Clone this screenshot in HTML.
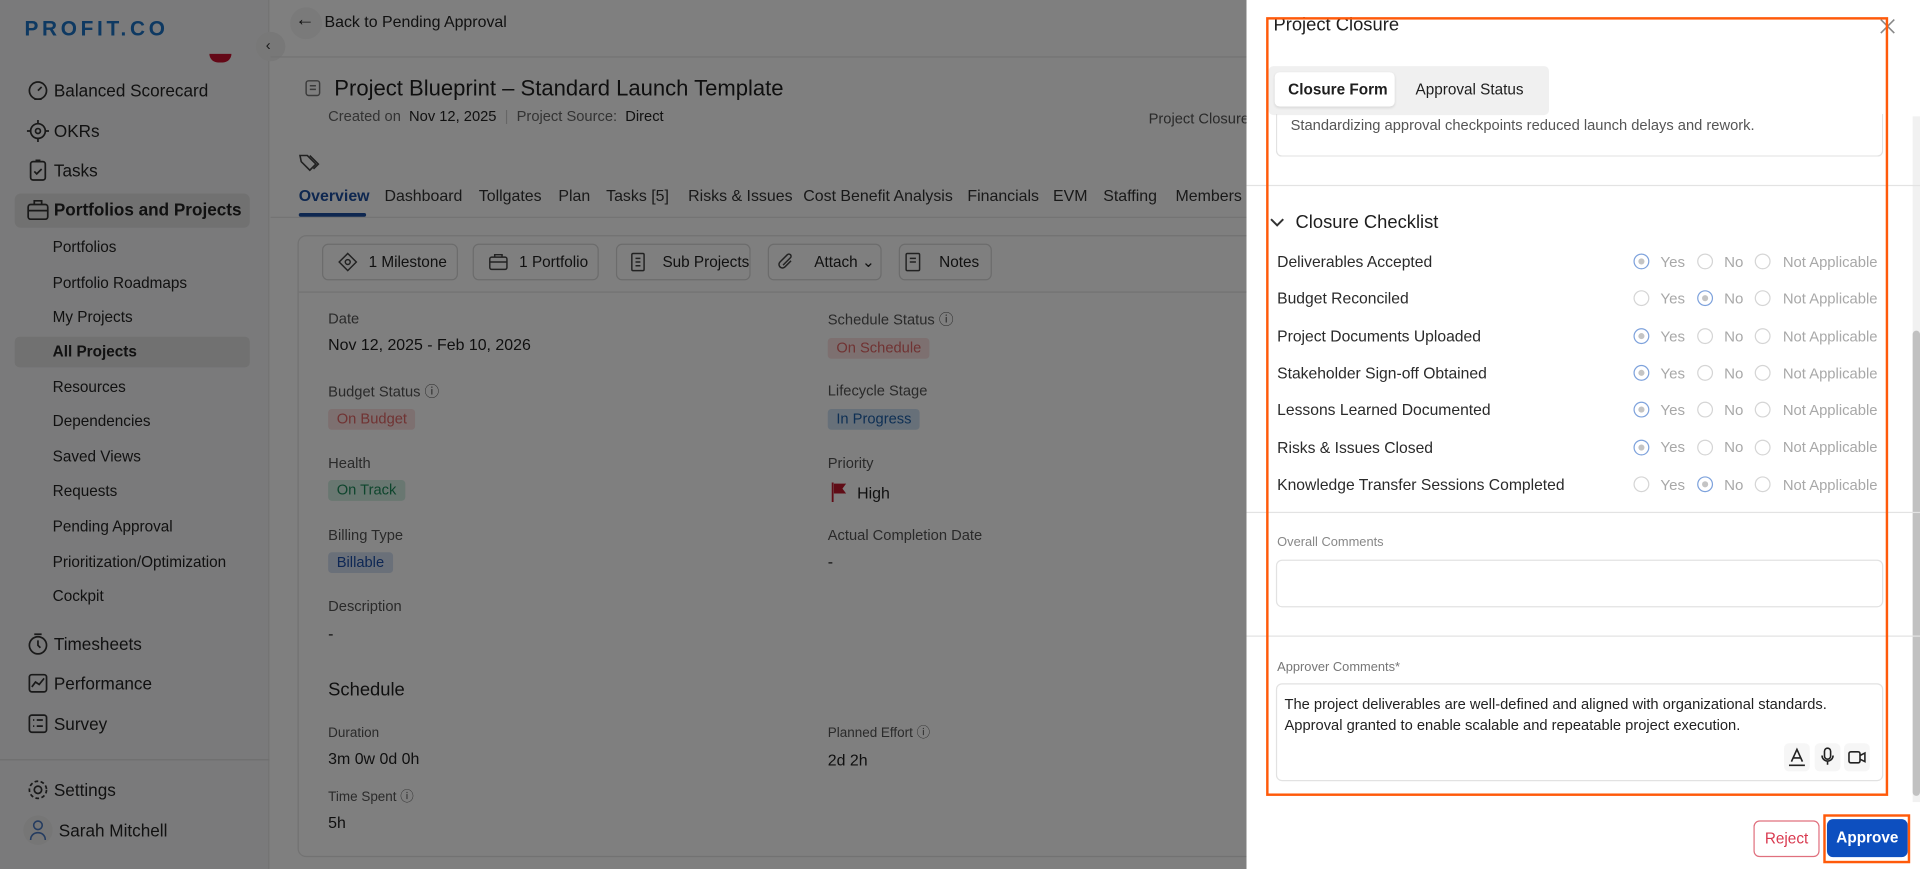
<!DOCTYPE html>
<html><head><meta charset="utf-8"><style>
*{margin:0;padding:0;box-sizing:border-box}
body{width:1920px;height:869px;overflow:hidden;background:#fff;font-family:"Liberation Sans",Arial,sans-serif}
#w{position:absolute;left:0;top:0;width:1568px;height:710px;transform:scale(1.22449);transform-origin:0 0;overflow:hidden}
.a{position:absolute;white-space:nowrap;line-height:18px}
.side{position:absolute;left:0;top:0;width:220px;height:710px;background:#f5f5f6;border-right:1px solid #e6e6e6}
.nav{font-size:14px;color:#222}
.sub{font-size:12.5px;color:#222}
.ic{position:absolute}
.lbl{font-size:12px;color:#555}
.val{font-size:13px;color:#1e1e1e}
.pill{position:absolute;height:17px;line-height:17px;padding:0 7px;font-size:12px;border-radius:3px}
.btn{position:absolute;top:199px;height:30px;border:1px solid #d8d8d8;border-radius:5px;font-size:12.5px;color:#222;line-height:28px;padding-left:37px}
.tab{font-size:13px;color:#333;top:151px}
.ov{position:absolute;left:0;top:0;width:1018px;height:710px;background:rgba(0,0,0,.5)}
.dr{position:absolute;left:1018px;top:0;width:550px;height:710px;background:#fff}
.row{font-size:12.8px;color:#2a2a2a}
.rd{position:absolute;width:13px;height:13px;border:1px solid #d5d5d5;border-radius:50%}
.rd.s{border-color:#7ea2dc}
.rd.s:after{content:"";position:absolute;left:3px;top:3px;width:5px;height:5px;border-radius:50%;background:#c4c4c4}
.hr{position:absolute;left:1018px;width:550px;height:1px;background:#e3e3e3}
.box{position:absolute;left:1042px;width:496px;border:1px solid #e2e2e2;border-radius:5px}
</style></head><body><div id="w">
<!-- sidebar -->
<div class="side"></div>
<div class="a" style="left:20px;top:13px;font-size:17px;font-weight:bold;letter-spacing:3px;color:#1d72c4;line-height:22px">PROFIT.CO</div>
<div style="position:absolute;left:171px;top:44px;width:18px;height:7px;border-radius:0 0 9px 9px;background:#c8102e"></div>
<div style="position:absolute;left:209px;top:26px;width:24px;height:24px;border-radius:50%;background:#f0f0f0"></div>
<div class="a" style="left:217px;top:28px;font-size:12px;color:#333">‹</div>
<svg class="ic" style="left:21px;top:65px" width="20" height="140" fill="none" stroke="#333" stroke-width="1.4">
<circle cx="10" cy="9" r="7"/><path d="M10 9l3-3M7 16h6"/>
<circle cx="10" cy="42" r="6"/><circle cx="10" cy="42" r="2"/><path d="M10 33v3M10 48v3M1 42h3M16 42h3"/>
<rect x="4" y="67" width="12" height="15" rx="2"/><path d="M7 75l2 2 4-4M8 66h4"/>
<rect x="2" y="101" width="16" height="12" rx="2"/><path d="M7 101v-3h6v3M2 106h16"/>
</svg>
<div class="a nav" style="left:44px;top:65px">Balanced Scorecard</div>
<div class="a nav" style="left:44px;top:98px">OKRs</div>
<div class="a nav" style="left:44px;top:130px">Tasks</div>
<div style="position:absolute;left:12px;top:158px;width:192px;height:28px;border-radius:5px;background:#e2e2e3"></div>
<svg class="ic" style="left:21px;top:162px" width="20" height="20" fill="none" stroke="#333" stroke-width="1.4"><rect x="2" y="5" width="16" height="12" rx="2"/><path d="M7 5V2h6v3M2 10h16"/></svg>
<div class="a nav" style="left:44px;top:162px;font-weight:bold">Portfolios and Projects</div>
<div style="position:absolute;left:12px;top:275px;width:192px;height:25px;border-radius:4px;background:#e2e2e3"></div>
<div class="a sub" style="left:43px;top:193px">Portfolios</div>
<div class="a sub" style="left:43px;top:222px">Portfolio Roadmaps</div>
<div class="a sub" style="left:43px;top:250px">My Projects</div>
<div class="a sub" style="left:43px;top:278px;font-weight:bold">All Projects</div>
<div class="a sub" style="left:43px;top:307px">Resources</div>
<div class="a sub" style="left:43px;top:335px">Dependencies</div>
<div class="a sub" style="left:43px;top:364px">Saved Views</div>
<div class="a sub" style="left:43px;top:392px">Requests</div>
<div class="a sub" style="left:43px;top:421px">Pending Approval</div>
<div class="a sub" style="left:43px;top:450px">Prioritization/Optimization</div>
<div class="a sub" style="left:43px;top:478px">Cockpit</div>
<svg class="ic" style="left:21px;top:516px" width="20" height="140" fill="none" stroke="#333" stroke-width="1.4">
<circle cx="10" cy="11" r="7"/><path d="M10 7v4l2 2M7 2h6"/>
<rect x="3" y="35" width="14" height="14" rx="2"/><path d="M5 45l3-4 3 2 4-5"/>
<rect x="3" y="68" width="14" height="14" rx="2"/><path d="M6 72h1M9 72h5M6 77h1M9 77h5"/>
<circle cx="10" cy="129" r="3"/><circle cx="10" cy="129" r="7" stroke-dasharray="3 2"/>
</svg>
<div class="a nav" style="left:44px;top:517px">Timesheets</div>
<div class="a nav" style="left:44px;top:549px">Performance</div>
<div class="a nav" style="left:44px;top:582px">Survey</div>
<div style="position:absolute;left:0;top:620px;width:220px;height:1px;background:#ddd"></div>
<div class="a nav" style="left:44px;top:636px">Settings</div>
<div style="position:absolute;left:19px;top:666px;width:24px;height:24px;border-radius:50%;background:#ececec"></div>
<svg class="ic" style="left:22px;top:668px" width="18" height="20" fill="none" stroke="#4a78c0" stroke-width="1.3"><circle cx="9" cy="6" r="3.5"/><path d="M3 18c0-4 3-6 6-6s6 2 6 6"/></svg>
<div class="a nav" style="left:48px;top:669px">Sarah Mitchell</div>

<!-- main -->
<div style="position:absolute;left:237px;top:6px;width:26px;height:26px;border-radius:50%;background:#f4f4f4"></div>
<div class="a" style="left:241px;top:8px;font-size:16px;color:#222">←</div>
<div class="a" style="left:265px;top:9px;font-size:13px;color:#222">Back to Pending Approval</div>
<div style="position:absolute;left:221px;top:46px;width:797px;height:1px;background:#e6e6e6"></div>
<svg class="ic" style="left:249px;top:65px" width="13" height="14" fill="none" stroke="#777" stroke-width="1.2"><rect x="1" y="1" width="11" height="12" rx="2"/><path d="M4 5h5M4 8h5"/></svg>
<div class="a" style="left:273px;top:61px;font-size:18px;color:#1e1e1e;line-height:22px">Project Blueprint – Standard Launch Template</div>
<div class="a" style="left:268px;top:86px;font-size:12px;color:#666">Created on <span style="color:#222">&nbsp;Nov 12, 2025</span> <span style="color:#ccc">&nbsp;|&nbsp;</span> Project Source: <span style="color:#222">&nbsp;Direct</span></div>
<div class="a" style="left:938px;top:88px;font-size:12px;color:#555">Project Closure</div>
<svg class="ic" style="left:243px;top:125px" width="18" height="16" fill="none" stroke="#444" stroke-width="1.3"><path d="M2 2h6l7 7-5 5-7-7z"/><path d="M10 2l7 7-4 4"/></svg>
<div class="a tab" style="left:244px;color:#1d4fa0;font-weight:bold">Overview</div>
<div class="a tab" style="left:314px">Dashboard</div>
<div class="a tab" style="left:391px">Tollgates</div>
<div class="a tab" style="left:456px">Plan</div>
<div class="a tab" style="left:495px">Tasks [5]</div>
<div class="a tab" style="left:562px">Risks &amp; Issues</div>
<div class="a tab" style="left:656px">Cost Benefit Analysis</div>
<div class="a tab" style="left:790px">Financials</div>
<div class="a tab" style="left:860px">EVM</div>
<div class="a tab" style="left:901px">Staffing</div>
<div class="a tab" style="left:960px">Members</div>
<div style="position:absolute;left:221px;top:177px;width:797px;height:1px;background:#e6e6e6"></div>
<div style="position:absolute;left:244px;top:174px;width:55px;height:3px;background:#1d4fa0;border-radius:2px"></div>
<div style="position:absolute;left:243px;top:192px;width:800px;height:508px;border:1px solid #e4e4e4;border-radius:7px"></div>
<div style="position:absolute;left:244px;top:238px;width:780px;height:1px;background:#e4e4e4"></div>
<div class="btn" style="left:263px;width:111px">1 Milestone</div>
<div class="btn" style="left:386px;width:103px">1 Portfolio</div>
<div class="btn" style="left:503px;width:110px">Sub Projects</div>
<div class="btn" style="left:627px;width:93px">Attach ⌄</div>
<div class="btn" style="left:734px;width:76px;padding-left:32px">Notes</div>
<svg class="ic" style="left:274px;top:205px" width="540" height="18" fill="none" stroke="#444" stroke-width="1.2">
<path d="M10 2l7 7-7 7-7-7z"/><circle cx="10" cy="9" r="2"/>
<rect x="126" y="5" width="14" height="10" rx="1.5"/><path d="M130 5V3h6v2M126 9h14"/>
<rect x="242" y="2" width="10" height="14" rx="1"/><path d="M245 6h4M245 9h4M245 12h4"/>
<path d="M372 8l-5 5a2.5 2.5 0 0 1-4-4l6-6a1.7 1.7 0 0 1 2.5 2.5l-6 6"/>
<rect x="466" y="2" width="11" height="14" rx="1"/><path d="M469 6h5M469 9h5"/>
</svg>
<div class="a lbl" style="left:268px;top:251px">Date</div>
<div class="a val" style="left:268px;top:273px">Nov 12, 2025 - Feb 10, 2026</div>
<div class="a lbl" style="left:676px;top:252px">Schedule Status ⓘ</div>
<div class="pill" style="left:676px;top:276px;background:#fbe0e0;color:#e06666">On Schedule</div>
<div class="a lbl" style="left:268px;top:311px">Budget Status ⓘ</div>
<div class="pill" style="left:268px;top:334px;background:#fbe0e0;color:#e06666">On Budget</div>
<div class="a lbl" style="left:676px;top:310px">Lifecycle Stage</div>
<div class="pill" style="left:676px;top:334px;background:#cfe1f3;color:#1d5fa8">In Progress</div>
<div class="a lbl" style="left:268px;top:369px">Health</div>
<div class="pill" style="left:268px;top:392px;background:#d3eee2;color:#1d8a5a">On Track</div>
<div class="a lbl" style="left:676px;top:369px">Priority</div>
<svg class="ic" style="left:679px;top:394px" width="14" height="16"><path d="M1 0v16" stroke="#c0192c" stroke-width="1.5"/><path d="M2 1h10l-3 4 3 4H2z" fill="#c0192c"/></svg>
<div class="a val" style="left:700px;top:394px">High</div>
<div class="a lbl" style="left:268px;top:428px">Billing Type</div>
<div class="pill" style="left:268px;top:451px;background:#d5e0f3;color:#1d4fa8">Billable</div>
<div class="a lbl" style="left:676px;top:428px">Actual Completion Date</div>
<div class="a val" style="left:676px;top:450px">-</div>
<div class="a lbl" style="left:268px;top:486px">Description</div>
<div class="a val" style="left:268px;top:509px">-</div>
<div class="a" style="left:268px;top:555px;font-size:15px;color:#1e1e1e">Schedule</div>
<div class="a" style="left:268px;top:590px;font-size:11px;color:#555">Duration</div>
<div class="a val" style="left:268px;top:611px">3m 0w 0d 0h</div>
<div class="a" style="left:676px;top:590px;font-size:11px;color:#555">Planned Effort ⓘ</div>
<div class="a val" style="left:676px;top:612px">2d 2h</div>
<div class="a" style="left:268px;top:642px;font-size:11px;color:#555">Time Spent ⓘ</div>
<div class="a val" style="left:268px;top:663px">5h</div>

<div class="ov"></div>

<!-- drawer -->
<div class="dr"></div>
<div style="position:absolute;left:1562px;top:95px;width:6px;height:560px;background:#f1f1f1"></div>
<div style="position:absolute;left:1562px;top:270px;width:6px;height:380px;background:#c1c1c1;border-radius:3px"></div>
<div class="a" style="left:1040px;top:12px;font-size:15px;color:#1e1e1e">Project Closure</div>
<svg class="ic" style="left:1535px;top:15px" width="13" height="13" fill="none" stroke="#888" stroke-width="1.3"><path d="M1 1l11 11M12 1L1 12"/></svg>
<div style="position:absolute;left:1036px;top:54px;width:229px;height:40px;background:#f0f0f0;border-radius:4px"></div>
<div style="position:absolute;left:1041px;top:59px;width:98px;height:28px;background:#fff;border-radius:4px;box-shadow:0 1px 2px rgba(0,0,0,.1)"></div>
<div class="a" style="left:1052px;top:64px;font-size:12.5px;font-weight:bold;color:#1e1e1e">Closure Form</div>
<div class="a" style="left:1156px;top:64px;font-size:12.5px;color:#1e1e1e">Approval Status</div>
<div class="box" style="top:93px;height:35px;border-top:none;border-radius:0 0 5px 5px"></div>
<div class="a" style="left:1054px;top:93px;font-size:12px;color:#555">Standardizing approval checkpoints reduced launch delays and rework.</div>
<div class="hr" style="top:151px"></div>
<svg class="ic" style="left:1036px;top:177px" width="14" height="10" fill="none" stroke="#333" stroke-width="1.6"><path d="M2 2l5 5 5-5"/></svg>
<div class="a" style="left:1058px;top:173px;font-size:15px;color:#1e1e1e">Closure Checklist</div>

<div class="a row" style="left:1043px;top:205px">Deliverables Accepted</div>
<div class="a row" style="left:1043px;top:235px">Budget Reconciled</div>
<div class="a row" style="left:1043px;top:266px">Project Documents Uploaded</div>
<div class="a row" style="left:1043px;top:296px">Stakeholder Sign-off Obtained</div>
<div class="a row" style="left:1043px;top:326px">Lessons Learned Documented</div>
<div class="a row" style="left:1043px;top:357px">Risks &amp; Issues Closed</div>
<div class="a row" style="left:1043px;top:387px">Knowledge Transfer Sessions Completed</div>

<div class="rd s" style="left:1334px;top:207px"></div><div class="rd" style="left:1386px;top:207px"></div><div class="rd" style="left:1433px;top:207px"></div>
<div class="rd" style="left:1334px;top:237px"></div><div class="rd s" style="left:1386px;top:237px"></div><div class="rd" style="left:1433px;top:237px"></div>
<div class="rd s" style="left:1334px;top:268px"></div><div class="rd" style="left:1386px;top:268px"></div><div class="rd" style="left:1433px;top:268px"></div>
<div class="rd s" style="left:1334px;top:298px"></div><div class="rd" style="left:1386px;top:298px"></div><div class="rd" style="left:1433px;top:298px"></div>
<div class="rd s" style="left:1334px;top:328px"></div><div class="rd" style="left:1386px;top:328px"></div><div class="rd" style="left:1433px;top:328px"></div>
<div class="rd s" style="left:1334px;top:359px"></div><div class="rd" style="left:1386px;top:359px"></div><div class="rd" style="left:1433px;top:359px"></div>
<div class="rd" style="left:1334px;top:389px"></div><div class="rd s" style="left:1386px;top:389px"></div><div class="rd" style="left:1433px;top:389px"></div>
<div style="position:absolute;left:1356px;top:199px;font-size:12.3px;color:#a8a8a8;line-height:30.3px">Yes<br>Yes<br>Yes<br>Yes<br>Yes<br>Yes<br>Yes</div>
<div style="position:absolute;left:1408px;top:199px;font-size:12.3px;color:#a8a8a8;line-height:30.3px">No<br>No<br>No<br>No<br>No<br>No<br>No</div>
<div style="position:absolute;left:1456px;top:199px;font-size:12.1px;color:#a8a8a8;line-height:30.3px;white-space:nowrap">Not Applicable<br>Not Applicable<br>Not Applicable<br>Not Applicable<br>Not Applicable<br>Not Applicable<br>Not Applicable</div>

<div class="hr" style="top:418px"></div>
<div class="a" style="left:1043px;top:434px;font-size:10.5px;color:#888">Overall Comments</div>
<div class="box" style="top:457px;height:39px"></div>
<div class="hr" style="top:519px"></div>
<div class="a" style="left:1043px;top:536px;font-size:10.5px;color:#777">Approver Comments*</div>
<div class="box" style="top:558px;height:80px"></div>
<div class="a" style="left:1049px;top:566px;font-size:12px;color:#222">The project deliverables are well-defined and aligned with organizational standards.</div>
<div class="a" style="left:1049px;top:583px;font-size:12px;color:#222">Approval granted to enable scalable and repeatable project execution.</div>
<div style="position:absolute;left:1457px;top:607px;width:21px;height:23px;background:#f6f6f6;border-radius:4px"></div>
<div style="position:absolute;left:1482px;top:607px;width:21px;height:23px;background:#f6f6f6;border-radius:4px"></div>
<div style="position:absolute;left:1506px;top:607px;width:21px;height:23px;background:#f6f6f6;border-radius:4px"></div>
<svg class="ic" style="left:1457px;top:607px" width="72" height="23" fill="none" stroke="#222" stroke-width="1.3">
<path d="M6 15l4.5-10 4.5 10M7.5 12h6M4 18h13"/>
<rect x="33" y="4" width="5" height="9" rx="2.5"/><path d="M31 10a4.5 4.5 0 0 0 9 0M35.5 14.5v3"/>
<rect x="53" y="7" width="9" height="9" rx="1.5"/><path d="M62 10l4-2v7l-4-2"/>
</svg>
<div style="position:absolute;left:1034px;top:14px;width:508px;height:636px;border:2px solid #ff5a0a"></div>
<div style="position:absolute;left:1432px;top:670px;width:54px;height:30px;border:1px solid #e0707e;border-radius:5px;font-size:12.5px;color:#d9394f;text-align:center;line-height:28px">Reject</div>
<div style="position:absolute;left:1492px;top:669px;width:66px;height:31px;background:#0d4fbf;border-radius:5px;font-size:12.5px;color:#fff;font-weight:bold;text-align:center;line-height:31px">Approve</div>
<div style="position:absolute;left:1489px;top:665px;width:71px;height:40px;border:2px solid #ff5a0a"></div>
</div></body></html>
